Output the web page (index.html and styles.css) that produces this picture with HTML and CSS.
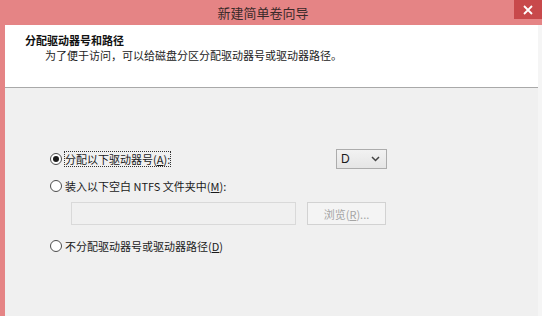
FILE: index.html
```html
<!DOCTYPE html>
<html lang="zh-CN">
<head>
<meta charset="utf-8">
<title>新建简单卷向导</title>
<link rel="stylesheet" href="styles.css">
</head>
<body>
<div class="window">
  <div class="titlebar">
    <span class="title">新建简单卷向导</span>
    <span class="close"><svg width="10" height="10" viewBox="0 0 10 10"><path d="M1 1L9 9M9 1L1 9" stroke="#fff" stroke-width="1.8"/></svg></span>
  </div>
  <div class="frame">
    <div class="header">
      <div class="h-title">分配驱动器号和路径</div>
      <div class="h-sub">为了便于访问，可以给磁盘分区分配驱动器号或驱动器路径。</div>
    </div>
    <div class="content">
      <div class="options">
        <div class="row row-first">
          <label class="opt"><span class="radio checked"></span><span class="focus">分配以下驱动器号(<u>A</u>):</span></label>
          <div class="select"><span>D</span><svg width="9" height="6" viewBox="0 0 9 6"><path d="M1 1L4.5 4.5L8 1" stroke="#444" stroke-width="1.5" fill="none"/></svg></div>
        </div>
        <div class="row">
          <label class="opt"><span class="radio"></span><span>装入以下空白 NTFS 文件夹中(<u>M</u>):</span></label>
        </div>
        <div class="row-input">
          <div class="textbox"></div>
          <div class="button">浏览(<u>R</u>)...</div>
        </div>
        <div class="row">
          <label class="opt"><span class="radio"></span><span>不分配驱动器号或驱动器路径(<u>D</u>)</span></label>
        </div>
      </div>
    </div>
  </div>
</div>
</body>
</html>
```

FILE: styles.css
```css
html, body {
  margin: 0;
  padding: 0;
}
body {
  width: 542px;
  height: 316px;
  overflow: hidden;
  background: #e58485;
  font-family: "Noto Sans CJK SC", "Noto Sans", sans-serif;
  font-size: 11px;
  color: #1a1a1a;
}
.window {
  width: 542px;
  height: 316px;
  display: flex;
  flex-direction: column;
}
.titlebar {
  position: relative;
  height: 25px;
  display: flex;
  align-items: center;
  justify-content: center;
  flex-shrink: 0;
}
.title {
  font-size: 13px;
  color: #3a2a2a;
  margin-right: 16px;
  line-height: 25px;
}
.close {
  position: absolute;
  right: 0;
  top: 0;
  width: 28px;
  height: 19px;
  background: #c8494b;
  display: flex;
  align-items: center;
  justify-content: center;
}
.frame {
  flex: 1;
  margin-left: 5px;
  display: flex;
  flex-direction: column;
  background: #f0f0f0;
  border-right: 4px solid #f5f5f5;
}
.header {
  height: 63px;
  background: #ffffff;
  border-bottom: 1px solid #a9a9a9;
  box-sizing: border-box;
  padding-top: 8px;
  padding-left: 20px;
}
.h-title {
  font-weight: bold;
  line-height: 15px;
  color: #111;
}
.h-sub {
  padding-left: 20px;
  line-height: 15px;
  color: #222;
}
.content {
  flex: 1;
  padding-top: 60px;
  padding-left: 45px;
}
.options {
  width: 337px;
  display: flex;
  flex-direction: column;
}
.row {
  height: 22px;
  display: flex;
  align-items: center;
}
.row-first {
  justify-content: space-between;
  margin-bottom: 5px;
}
.opt {
  display: flex;
  align-items: center;
  gap: 3px;
}
.radio {
  width: 12px;
  height: 12px;
  border: 1px solid #4d4d4d;
  border-radius: 50%;
  box-sizing: border-box;
  background: #fff;
  display: flex;
  align-items: center;
  justify-content: center;
}
.radio.checked::after {
  content: "";
  width: 6px;
  height: 6px;
  border-radius: 50%;
  background: #1a1a1a;
}
.focus {
  outline: 1px dotted #333;
  outline-offset: 0;
  line-height: 14px;
}
.select {
  width: 51px;
  height: 20px;
  box-sizing: border-box;
  border: 1px solid #acacac;
  background: linear-gradient(#f2f2f2, #e5e5e5);
  display: flex;
  align-items: center;
  justify-content: space-between;
  padding: 0 6px 0 4px;
  font-family: "Liberation Sans", sans-serif;
  font-size: 12px;
}
.row-input {
  margin-top: 5px;
  margin-left: 21px;
  display: flex;
  gap: 11px;
  height: 23px;
  margin-bottom: 10px;
}
.textbox {
  width: 225px;
  height: 23px;
  box-sizing: border-box;
  border: 1px solid #d9d9d9;
  background: #f0f0f0;
}
.button {
  width: 79px;
  height: 23px;
  box-sizing: border-box;
  border: 1px solid #d2d2d2;
  background: #f4f4f4;
  color: #a5a5a5;
  display: flex;
  align-items: center;
  justify-content: center;
  font-size: 11px;
}
u {
  text-decoration: underline;
  text-underline-offset: 1px;
}
```
